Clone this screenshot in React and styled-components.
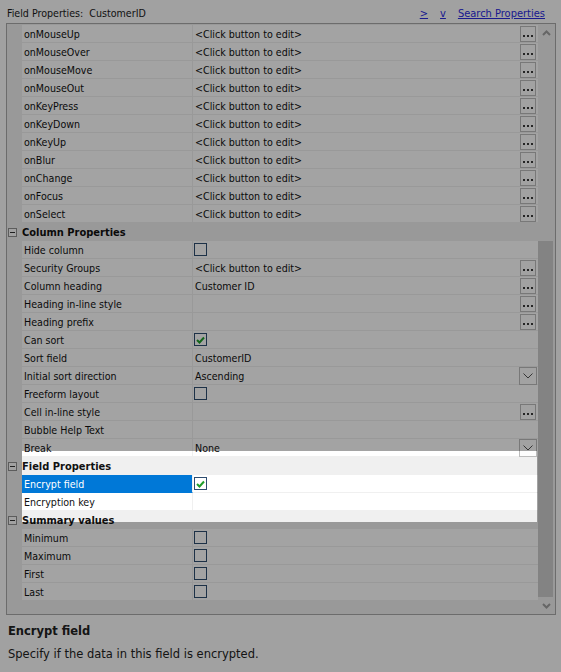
import React from 'react';
import styled, { createGlobalStyle } from 'styled-components';

const FONT = `"DejaVu Sans Condensed", Tahoma, "Liberation Sans", sans-serif`;
const DESC_FONT = `"DejaVu Sans", Verdana, "Liberation Sans", sans-serif`;

const Global = createGlobalStyle`
  html, body { margin: 0; padding: 0; background: #fff; }
  body { font-family: ${FONT}; font-size: 10.6px; color: #000; }
  * { box-sizing: border-box; }
`;

const Page = styled.div`
  position: relative;
  width: 561px;
  height: 672px;
  overflow: hidden;
  background: #fcfcfc;
  display: flex;
  flex-direction: column;
`;

const TitleBar = styled.div`
  height: 23px;
  display: flex;
  align-items: center;
  padding: 3px 16px 0 7px;
`;

const Title = styled.div`
  flex: 1;
  white-space: pre;
  color: #1a1a1a;
`;

const Links = styled.div`
  display: flex;
  gap: 12px;
  font-size: 11px;
`;

const LinkText = styled.a`
  color: #2a2ae0;
  text-decoration: underline;
  cursor: pointer;
`;

const Panel = styled.div`
  margin: 0 5px 0 6px;
  height: 592px;
  border: 1px solid #a9a9a9;
  display: flex;
  background: #fff;
`;

const Content = styled.div`
  flex: 1;
  padding-top: 1px;
  background: #f0f0f0;
  display: flex;
  flex-direction: column;
`;

const Row = styled.div`
  display: grid;
  grid-template-columns: 15px 171px 1fr;
  height: 18px;
  background: #fff;
`;

const Gutter = styled.div`
  background: #f0f0f0;
  display: flex;
  align-items: flex-start;
`;

const NameCell = styled.div`
  border-bottom: 1px solid ${p => (p.$selected ? '#0078d7' : '#f0f0f0')};
  border-right: 1px solid #f0f0f0;
  padding: 1px 0 0 2px;
  line-height: 16px;
  white-space: nowrap;
  overflow: hidden;
  background: ${p => (p.$selected ? '#0078d7' : 'transparent')};
  color: ${p => (p.$selected ? '#fff' : '#111')};
`;

const ValueCell = styled.div`
  border-bottom: 1px solid #f0f0f0;
  display: flex;
  align-items: flex-start;
  padding-left: 2px;
  color: #111;
`;

const ValueText = styled.span`
  flex: 1;
  padding-top: 1px;
  line-height: 16px;
  white-space: nowrap;
`;

const EllipsisBtn = styled.div`
  width: 16px;
  height: 16px;
  margin: 1px 2px 0 0;
  border: 1px solid #bcbcbc;
  background: #fdfdfd;
  display: flex;
  align-items: flex-end;
  justify-content: center;
  gap: 2px;
  padding-bottom: 4px;
`;

const Dot = styled.span`
  width: 2px;
  height: 2px;
  background: #3a3a3a;
`;

const DropBtn = styled.div`
  width: 18px;
  height: 18px;
  margin: 0 1px -1px 0;
  border: 1px solid #bcbcbc;
  background: #fdfdfd;
  display: flex;
  align-items: center;
  justify-content: center;
  position: relative;
  z-index: 1;
`;

const CheckBox = styled.div`
  width: 13px;
  height: 13px;
  margin: 2px 0 0 -1px;
  border: 1px solid #2e4d70;
  background: #fff;
  display: flex;
  align-items: center;
  justify-content: center;
`;

const GroupRow = styled.div`
  display: grid;
  grid-template-columns: 15px 1fr;
  height: 18px;
  background: #f0f0f0;
`;

const MinusBox = styled.div`
  width: 9px;
  height: 9px;
  margin: 5px 0 0 1px;
  border: 1px solid #919191;
  background: #fcfcfc;
  display: flex;
  align-items: center;
  justify-content: center;
  &::after {
    content: '';
    width: 5px;
    height: 1px;
    background: #333;
  }
`;

const GroupLabel = styled.div`
  font-weight: bold;
  font-size: 11px;
  padding-top: 1px;
  line-height: 17px;
  color: #111;
  white-space: nowrap;
`;

const ScrollBar = styled.div`
  width: 17px;
  background: #f0f0f0;
  display: flex;
  flex-direction: column;
`;

const ArrowBtn = styled.div`
  height: 17px;
  display: flex;
  align-items: center;
  justify-content: center;
`;

const Track = styled.div`
  flex: 1;
  padding-top: ${p => p.$offset}px;
`;

const Thumb = styled.div`
  width: 15px;
  height: ${p => p.$size}px;
  background: #cdcdcd;
`;

const Description = styled.div`
  padding: 9px 8px 0 8px;
  display: flex;
  flex-direction: column;
  gap: 9px;
  font-family: ${DESC_FONT};
`;

const DescTitle = styled.div`
  font-weight: bold;
  font-size: 11.5px;
  color: #222;
`;

const DescText = styled.div`
  font-size: 11.5px;
  color: #222;
`;

const Spotlight = styled.div`
  position: absolute;
  left: 22px;
  top: 451px;
  width: 515px;
  height: 71px;
  box-shadow: 0 0 0 1400px rgba(0, 0, 0, 0.36);
  pointer-events: none;
  z-index: 10;
`;

const Chevron = ({ dir }) => (
  <svg width="9" height="6" viewBox="0 0 9 6">
    <polyline
      points={dir === 'up' ? '1,5 4.5,1.5 8,5' : '1,1 4.5,4.5 8,1'}
      fill="none"
      stroke="#a0a0a0"
      strokeWidth="2"
    />
  </svg>
);

const DropChevron = () => (
  <svg width="10" height="6" viewBox="0 0 10 6">
    <polyline points="0.5,0.5 5,5 9.5,0.5" fill="none" stroke="#555" strokeWidth="1" />
  </svg>
);

const Check = () => (
  <svg width="9" height="8" viewBox="0 0 9 8">
    <polyline points="1,4 3.5,6.5 8,1.5" fill="none" stroke="#1f9e2a" strokeWidth="2" />
  </svg>
);

const CLICK = '<Click button to edit>';

const rows = [
  { n: 'onMouseUp', v: CLICK, b: 'e' },
  { n: 'onMouseOver', v: CLICK, b: 'e' },
  { n: 'onMouseMove', v: CLICK, b: 'e' },
  { n: 'onMouseOut', v: CLICK, b: 'e' },
  { n: 'onKeyPress', v: CLICK, b: 'e' },
  { n: 'onKeyDown', v: CLICK, b: 'e' },
  { n: 'onKeyUp', v: CLICK, b: 'e' },
  { n: 'onBlur', v: CLICK, b: 'e' },
  { n: 'onChange', v: CLICK, b: 'e' },
  { n: 'onFocus', v: CLICK, b: 'e' },
  { n: 'onSelect', v: CLICK, b: 'e' },
  { g: 'Column Properties' },
  { n: 'Hide column', c: false },
  { n: 'Security Groups', v: CLICK, b: 'e' },
  { n: 'Column heading', v: 'Customer ID', b: 'e' },
  { n: 'Heading in-line style', v: '', b: 'e' },
  { n: 'Heading prefix', v: '', b: 'e' },
  { n: 'Can sort', c: true },
  { n: 'Sort field', v: 'CustomerID' },
  { n: 'Initial sort direction', v: 'Ascending', b: 'd' },
  { n: 'Freeform layout', c: false },
  { n: 'Cell in-line style', v: '', b: 'e' },
  { n: 'Bubble Help Text', v: '' },
  { n: 'Break', v: 'None', b: 'd' },
  { g: 'Field Properties' },
  { n: 'Encrypt field', c: true, sel: true },
  { n: 'Encryption key', v: '' },
  { g: 'Summary values' },
  { n: 'Minimum', c: false },
  { n: 'Maximum', c: false },
  { n: 'First', c: false },
  { n: 'Last', c: false },
];

export default function App() {
  return (
    <>
      <Global />
      <Page>
        <TitleBar>
          <Title>{'Field Properties:  CustomerID'}</Title>
          <Links>
            <LinkText>&gt;</LinkText>
            <LinkText>v</LinkText>
            <LinkText>Search Properties</LinkText>
          </Links>
        </TitleBar>
        <Panel>
          <Content>
            {rows.map((r, i) =>
              r.g ? (
                <GroupRow key={i}>
                  <Gutter>
                    <MinusBox />
                  </Gutter>
                  <GroupLabel>{r.g}</GroupLabel>
                </GroupRow>
              ) : (
                <Row key={i}>
                  <Gutter />
                  <NameCell $selected={r.sel}>{r.n}</NameCell>
                  <ValueCell>
                    {r.c !== undefined ? (
                      <>
                        <CheckBox>{r.c && <Check />}</CheckBox>
                        <ValueText />
                      </>
                    ) : (
                      <ValueText>{r.v}</ValueText>
                    )}
                    {r.b === 'e' && (
                      <EllipsisBtn>
                        <Dot />
                        <Dot />
                        <Dot />
                      </EllipsisBtn>
                    )}
                    {r.b === 'd' && (
                      <DropBtn>
                        <DropChevron />
                      </DropBtn>
                    )}
                  </ValueCell>
                </Row>
              )
            )}
          </Content>
          <ScrollBar>
            <ArrowBtn>
              <Chevron dir="up" />
            </ArrowBtn>
            <Track $offset={200}>
              <Thumb $size={356} />
            </Track>
            <ArrowBtn>
              <Chevron dir="down" />
            </ArrowBtn>
          </ScrollBar>
        </Panel>
        <Description>
          <DescTitle>Encrypt field</DescTitle>
          <DescText>Specify if the data in this field is encrypted.</DescText>
        </Description>
        <Spotlight />
      </Page>
    </>
  );
}
